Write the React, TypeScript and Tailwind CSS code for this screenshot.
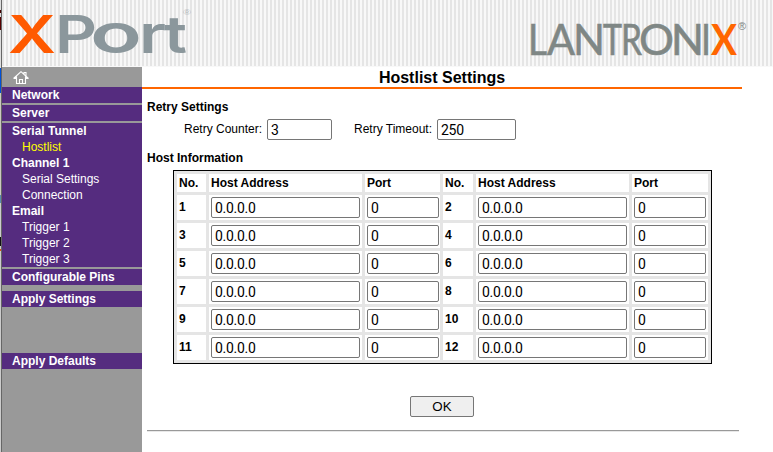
import React from 'react';

const wordmark = [
  { ch: 'L', x: 528, w: 19 },
  { ch: 'A', x: 547, w: 28 },
  { ch: 'N', x: 573, w: 32 },
  { ch: 'T', x: 603, w: 19 },
  { ch: 'R', x: 621, w: 21 },
  { ch: 'O', x: 639, w: 35 },
  { ch: 'N', x: 671, w: 33 },
  { ch: 'I', x: 701, w: 10 },
];

const portLetters = [
  { ch: 'P', x: 55, w: 42, size: 52 },
  { ch: 'o', x: 90, w: 52, size: 54 },
  { ch: 'r', x: 139, w: 27, size: 53 },
  { ch: 't', x: 164, w: 23, size: 52 },
];

function Banner() {
  return (
    <header className="h-[67px] border-b border-[#f8f8f8] bg-[repeating-linear-gradient(90deg,#e5e5e5_0px,#e5e5e5_2px,#f8f8f8_2px,#f8f8f8_4px)]">
      <svg width="771" height="66" viewBox="2 0 771 66" className="block">
        <g fontFamily="Inter, sans-serif" fontWeight="600" fontSize="52">
          <text x="8" y="53" textLength="48" lengthAdjust="spacingAndGlyphs" fill="#ff5a00">X</text>
          {portLetters.map((l) => (
            <text key={l.ch} x={l.x} y="53" fontSize={l.size} textLength={l.w} lengthAdjust="spacingAndGlyphs" fill="#8b979c">{l.ch}</text>
          ))}
        </g>
        <text x="183" y="15" fontFamily="'Liberation Sans', sans-serif" fontSize="8" textLength="8" lengthAdjust="spacingAndGlyphs" fill="#b5bcc0">®</text>
        <g fontFamily="Lato, sans-serif" fontSize="42.5" fill="#7f8785">
          {wordmark.map((l, i) => (
            <text key={i} x={l.x} y="54.500" textLength={l.w} lengthAdjust="spacingAndGlyphs" stroke="#7f8785" strokeWidth="0.6">{l.ch}</text>
          ))}
          <text x="711" y="54.500" textLength="26" lengthAdjust="spacingAndGlyphs" fill="#ff6600" fontWeight="700">X</text>
        </g>
        <text x="738" y="30" fontFamily="'Liberation Sans', sans-serif" fontSize="11" fill="#7f8785">®</text>
      </svg>
    </header>
  );
}

function HomeIcon() {
  return (
    <svg width="16" height="14" viewBox="0 0 16 14" fill="none" stroke="#fff" strokeWidth="1.1">
      <path d="M.5 7.500 8 .7l7.500 6.800M3.500 5.500v7h9v-7M6.500 12.500v-4h3v4M11 3V1.500h2V5.200M.5 7.500h3M12.500 7.500h3" />
    </svg>
  );
}

const bold = 'h-4 pl-[10px] text-xs leading-4 font-bold';
const sub = 'h-4 pl-[20px] text-xs leading-4';

function Sidebar() {
  return (
    <nav className="w-[140px] shrink-0 bg-[#999999] text-white">
      <div className="flex h-5 pt-1 pl-[11px]"><HomeIcon /></div>
      <div className="flex flex-col gap-[2px]">
        <div className="bg-[#552c7f]"><div className={bold}>Network</div></div>
        <div className="bg-[#552c7f]"><div className={bold}>Server</div></div>
        <div className="bg-[#552c7f]">
          <div className={bold}>Serial Tunnel</div>
          <div className={sub + ' text-[#ffff00]'}>Hostlist</div>
          <div className={bold}>Channel 1</div>
          <div className={sub}>Serial Settings</div>
          <div className={sub}>Connection</div>
          <div className={bold}>Email</div>
          <div className={sub}>Trigger 1</div>
          <div className={sub}>Trigger 2</div>
          <div className={sub}>Trigger 3</div>
        </div>
        <div className="bg-[#552c7f]"><div className={bold}>Configurable Pins</div></div>
      </div>
      <div className="mt-[6px] bg-[#552c7f]"><div className={bold}>Apply Settings</div></div>
      <div className="mt-[46px] bg-[#552c7f]"><div className={bold}>Apply Defaults</div></div>
    </nav>
  );
}

const field =
  "block h-[21px] rounded-[2px] border border-[#767676] bg-white pl-[3px] font-['Roboto',sans-serif] text-[14px] leading-[19px] tracking-[-0.3px] text-black outline-none";

function HostCells({ n }: { n: number }) {
  return (
    <>
      <div className="bg-white pl-[2px] leading-[25px] font-bold">{n}</div>
      <div className="bg-white pt-[2px] pl-[2px]">
        <input className={field + ' w-[149px]'} defaultValue="0.0.0.0" />
      </div>
      <div className="bg-white pt-[2px] pl-[2px]">
        <input className={field + ' w-[72px]'} defaultValue="0" />
      </div>
    </>
  );
}

function HostTable() {
  const heads = ['No.', 'Host Address', 'Port', 'No.', 'Host Address', 'Port'];
  return (
    <div className="mt-[4px] ml-[31px] grid h-[194px] w-[539px] grid-cols-[29px_153px_75px_30px_153px_76px] grid-rows-[18px_repeat(6,25px)] gap-[3px] border border-black bg-[#e5e5e5] p-[3px]">
      {heads.map((h, i) => (
        <div key={i} className="bg-white pl-[2px] leading-[18px] font-bold">{h}</div>
      ))}
      {Array.from({ length: 12 }, (_, i) => (
        <HostCells key={i} n={i + 1} />
      ))}
    </div>
  );
}

export default function App() {
  return (
    <div className="flex h-[452px] w-[773px] overflow-hidden bg-white font-['Liberation_Sans',Arial,sans-serif] text-xs text-black">
      <div className="w-px shrink-0 bg-[linear-gradient(#ddd_10px,#400_10px,#400_13px,#ddd_13px,#ddd_17px,#500_17px,#500_30px,#ddd_30px,#ddd_68px,#0050d8_68px,#0050d8_93px,#cbcabf_93px,#cbcabf_195px,#5a8cb0_195px,#5a8cb0_203px,#ccc_203px,#ccc_237px,#111_237px,#111_246px,#ccc_246px,#ccc_249px,#e05010_249px,#e05010_251px,#ccc_251px)]" />
      <div className="w-px shrink-0 bg-[#666]" />
      <div className="flex w-[771px] flex-col">
        <Banner />
        <div className="flex flex-1">
          <Sidebar />
          <main className="w-[600px]">
            <h1 className="h-[22px] border-b-2 border-[#ff6600] pt-px text-center text-base leading-[20px] font-bold">Hostlist Settings</h1>
            <div className="pl-[5px]">
              <h2 className="mt-[10px] h-4 leading-4 font-bold">Retry Settings</h2>
              <div className="mt-[4px] flex h-[21px] pl-[37px] leading-[20px]">
                <label className="w-[83px]">Retry Counter:</label>
                <input className={field + ' w-[65px]'} defaultValue="3" />
                <label className="ml-[22px] w-[83px]">Retry Timeout:</label>
                <input className={field + ' w-[79px]'} defaultValue="250" />
              </div>
              <h2 className="mt-[10px] h-4 leading-4 font-bold">Host Information</h2>
            </div>
            <HostTable />
            <button className="mt-[32px] ml-[268px] block h-[21px] w-16 rounded-[2px] border border-[#767676] bg-[#efefef] text-[13.33px] leading-[19px]">OK</button>
            <div className="mt-[13px] ml-[5px] h-[2px] w-[592px] border-t border-b border-t-[#999] border-b-[#e8e8e8]" />
          </main>
        </div>
      </div>
    </div>
  );
}
